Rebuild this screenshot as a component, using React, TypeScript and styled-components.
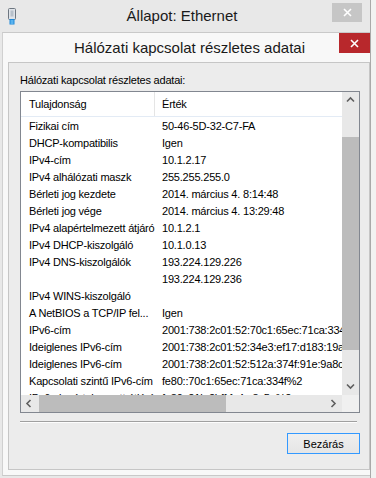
import React from 'react';
import styled, { createGlobalStyle } from 'styled-components';

const GlobalStyle = createGlobalStyle`
  html, body {
    margin: 0;
    padding: 0;
  }
  body {
    width: 376px;
    height: 478px;
    overflow: hidden;
    background: #f2f2f2;
    font-family: "Liberation Sans", Arial, sans-serif;
    color: #000;
  }
`;

const rows: [string, string][] = [
  ['Fizikai cím', '50-46-5D-32-C7-FA'],
  ['DHCP-kompatibilis', 'Igen'],
  ['IPv4-cím', '10.1.2.17'],
  ['IPv4 alhálózati maszk', '255.255.255.0'],
  ['Bérleti jog kezdete', '2014. március 4. 8:14:48'],
  ['Bérleti jog vége', '2014. március 4. 13:29:48'],
  ['IPv4 alapértelmezett átjáró', '10.1.2.1'],
  ['IPv4 DHCP-kiszolgáló', '10.1.0.13'],
  ['IPv4 DNS-kiszolgálók', '193.224.129.226'],
  ['', '193.224.129.236'],
  ['IPv4 WINS-kiszolgáló', ''],
  ['A NetBIOS a TCP/IP fel...', 'Igen'],
  ['IPv6-cím', '2001:738:2c01:52:70c1:65ec:71ca:334f'],
  ['Ideiglenes IPv6-cím', '2001:738:2c01:52:34e3:ef17:d183:19a2'],
  ['Ideiglenes IPv6-cím', '2001:738:2c01:52:512a:374f:91e:9a8c'],
  ['Kapcsolati szintű IPv6-cím', 'fe80::70c1:65ec:71ca:334f%2'],
  ['IPv6 alapértelmezett átjáró', 'fe80::21b:2bff:fe4a:8c5e%2'],
];

const Desktop = styled.div`
  width: 376px;
  height: 478px;
`;

const OuterWindow = styled.div`
  box-sizing: border-box;
  width: 371px;
  height: 478px;
  background: #e8e8e8;
  border-right: 1px solid #a9a9a9;
  display: flex;
  flex-direction: column;
`;

const OuterTitleBar = styled.div`
  height: 32px;
  padding-right: 6px;
  display: grid;
  grid-template-columns: 1fr auto 1fr;
  align-items: center;
`;

const OuterTitle = styled.div`
  font-size: 15px;
  line-height: 20px;
  color: #1a1a1a;
  white-space: nowrap;
`;

const IconSlot = styled.div`
  padding-left: 7px;
  padding-top: 1px;
  display: flex;
`;

const CloseSlot = styled.div`
  justify-self: end;
  align-self: start;
  padding-top: 3px;
  padding-right: 2px;
`;

const CloseButton = styled.div<{ $active?: boolean }>`
  width: ${(p) => (p.$active ? 31 : 30)}px;
  height: ${(p) => (p.$active ? 20 : 19)}px;
  background: ${(p) => (p.$active ? '#b8282c' : '#c6c6c6')};
  display: flex;
  align-items: center;
  justify-content: center;
`;

const Dialog = styled.div`
  margin-left: 2px;
  flex: 1;
  margin-bottom: 2px;
  background: #f8f8f8;
  border-top: 1px solid #c9c9c9;
  border-left: 1px solid #d0d0d0;
  border-bottom: 1px solid #c9c9c9;
  padding: 0 0 5px 5px;
  display: flex;
  flex-direction: column;
`;

const DialogTitleBar = styled.div`
  height: 29px;
  display: flex;
  align-items: flex-start;
  margin-left: -5px;
`;

const DialogTitle = styled.div`
  flex: 1;
  padding-left: 37px;
  text-align: center;
  font-size: 15px;
  line-height: 29px;
  color: #1a1a1a;
  white-space: nowrap;
`;

const Client = styled.div`
  flex: 1;
  background: #ececec;
  border: 1px solid #c6c6c6;
  padding: 10px 9px 15px 11px;
  display: flex;
  flex-direction: column;
  font-size: 11px;
  letter-spacing: -0.2px;
`;

const Caption = styled.div`
  line-height: 15px;
  white-space: nowrap;
`;

const ListBox = styled.div`
  margin-top: 3px;
  height: 320px;
  border: 1px solid #828790;
  background: #fff;
  display: grid;
  grid-template-columns: 1fr 17px;
  grid-template-rows: 1fr 17px;
`;

const Viewport = styled.div`
  overflow: hidden;
  background: #fff;
`;

const HeaderRow = styled.div`
  height: 24px;
  display: flex;
  align-items: center;
  border-bottom: 1px solid #e3ebf5;
`;

const Cell = styled.div<{ $first?: boolean }>`
  flex: none;
  box-sizing: border-box;
  width: ${(p) => (p.$first ? '134px' : 'auto')};
  padding-left: ${(p) => (p.$first ? 8 : 7)}px;
  white-space: nowrap;
`;

const HeaderCell = styled(Cell)`
  height: 100%;
  line-height: 24px;
  border-right: ${(p) => (p.$first ? '1px solid #e5e5e5' : 'none')};
`;

const DataRow = styled.div`
  height: 17px;
  line-height: 18px;
  display: flex;
`;

const VScroll = styled.div`
  background: #e8e8e8;
  display: flex;
  flex-direction: column;
`;

const HScroll = styled.div`
  background: #e8e8e8;
  display: flex;
`;

const Arrow = styled.div`
  width: 17px;
  height: 17px;
  flex: none;
  display: flex;
  align-items: center;
  justify-content: center;
`;

const VThumb = styled.div`
  margin-top: 28px;
  height: 213px;
  background: #bcbcbc;
`;

const HThumb = styled.div`
  margin-left: 1px;
  width: 187px;
  background: #bcbcbc;
`;

const Spacer = styled.div`
  flex: 1;
`;

const Corner = styled.div`
  background: #f0f0f0;
`;

const Separator = styled.div`
  margin-top: 8px;
  margin-right: 3px;
  height: 0;
  border-top: 1px solid #a0a0a0;
  border-bottom: 1px solid #fdfdfd;
`;

const ButtonRow = styled.div`
  margin-top: 10px;
  display: flex;
  justify-content: flex-end;
`;

const PushButton = styled.button`
  box-sizing: border-box;
  width: 73px;
  height: 21px;
  padding: 0;
  border: 1px solid #3399ff;
  background: linear-gradient(#efefef, #e5e5e5);
  font-family: "Liberation Sans", Arial, sans-serif;
  font-size: 11px;
  letter-spacing: 0;
  color: #000;
`;

const PlugIcon = () => (
  <svg width="10" height="17" viewBox="0 0 10 17">
    <rect x="1.5" y="0.5" width="7" height="11" rx="1" fill="#dfe3e8" stroke="#6d7680" />
    <rect x="3.5" y="2.5" width="3" height="6" fill="#b7c0ca" />
    <rect x="2.5" y="11" width="5" height="5.5" fill="#1e88d8" />
    <rect x="3.5" y="12" width="3" height="4" fill="#59b2ee" />
  </svg>
);

const CloseGlyph = () => (
  <svg width="9" height="9" viewBox="0 0 9 9">
    <path d="M1 1 L8 8 M8 1 L1 8" stroke="#fff" strokeWidth="1.6" />
  </svg>
);

const Chevron = ({ dir }: { dir: 'up' | 'down' | 'left' | 'right' }) => {
  const pts = {
    up: '1,5.5 4.5,2 8,5.5',
    down: '1,2.5 4.5,6 8,2.5',
    left: '5.5,1 2,4.5 5.5,8',
    right: '2.5,1 6,4.5 2.5,8',
  }[dir];
  return (
    <svg width="9" height="9" viewBox="0 0 9 9">
      <polyline points={pts} fill="none" stroke="#5f5f5f" strokeWidth="1.6" />
    </svg>
  );
};

export default function App() {
  return (
    <>
      <GlobalStyle />
      <Desktop>
        <OuterWindow>
          <OuterTitleBar>
            <IconSlot>
              <PlugIcon />
            </IconSlot>
            <OuterTitle>Állapot: Ethernet</OuterTitle>
            <CloseSlot>
              <CloseButton>
                <CloseGlyph />
              </CloseButton>
            </CloseSlot>
          </OuterTitleBar>
          <Dialog>
            <DialogTitleBar>
              <DialogTitle>Hálózati kapcsolat részletes adatai</DialogTitle>
              <CloseButton $active>
                <CloseGlyph />
              </CloseButton>
            </DialogTitleBar>
            <Client>
              <Caption>Hálózati kapcsolat részletes adatai:</Caption>
              <ListBox>
                <Viewport>
                  <HeaderRow>
                    <HeaderCell $first>Tulajdonság</HeaderCell>
                    <HeaderCell>Érték</HeaderCell>
                  </HeaderRow>
                  {rows.map(([name, value], i) => (
                    <DataRow key={i}>
                      <Cell $first>{name}</Cell>
                      <Cell>{value}</Cell>
                    </DataRow>
                  ))}
                </Viewport>
                <VScroll>
                  <Arrow>
                    <Chevron dir="up" />
                  </Arrow>
                  <VThumb />
                  <Spacer />
                  <Arrow>
                    <Chevron dir="down" />
                  </Arrow>
                </VScroll>
                <HScroll>
                  <Arrow>
                    <Chevron dir="left" />
                  </Arrow>
                  <HThumb />
                  <Spacer />
                  <Arrow>
                    <Chevron dir="right" />
                  </Arrow>
                </HScroll>
                <Corner />
              </ListBox>
              <Separator />
              <ButtonRow>
                <PushButton>Bezárás</PushButton>
              </ButtonRow>
            </Client>
          </Dialog>
        </OuterWindow>
      </Desktop>
    </>
  );
}
